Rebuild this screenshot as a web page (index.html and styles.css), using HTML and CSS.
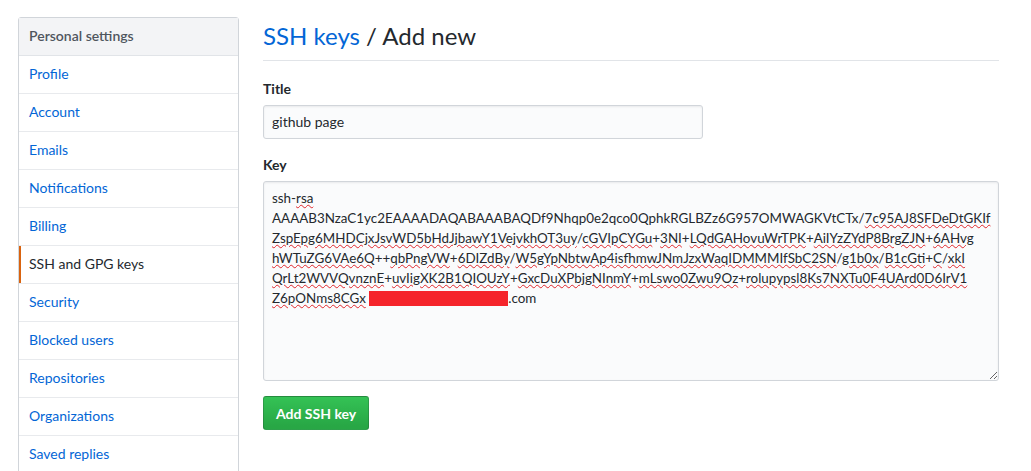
FILE: index.html
```html
<!DOCTYPE html>
<html lang="en">
<head>
<meta charset="utf-8">
<title>SSH keys / Add new</title>
<link rel="stylesheet" href="styles.css">
</head>
<body>
<div class="page">
  <nav class="menu">
    <div class="menu-heading">Personal settings</div>
    <a class="menu-item" href="#">Profile</a>
    <a class="menu-item" href="#">Account</a>
    <a class="menu-item" href="#">Emails</a>
    <a class="menu-item" href="#">Notifications</a>
    <a class="menu-item" href="#">Billing</a>
    <a class="menu-item selected" href="#">SSH and GPG keys</a>
    <a class="menu-item" href="#">Security</a>
    <a class="menu-item" href="#">Blocked users</a>
    <a class="menu-item" href="#">Repositories</a>
    <a class="menu-item" href="#">Organizations</a>
    <a class="menu-item" href="#">Saved replies</a>
  </nav>
  <main class="main">
    <h2 class="subhead"><a href="#" class="subhead-link">SSH keys</a> / Add new</h2>
    <form class="form">
      <label class="label">Title</label>
      <div class="input">github page</div>
      <label class="label">Key</label>
      <div class="textarea">
        <div class="line">ssh-<span class="sp">rsa</span></div>
        <div class="line">AAAAB3NzaC1yc2EAAAADAQABAAABAQDf9Nhqp0e2qco0QphkRGLBZz6G957OMWAGKVtCTx/<span class="sp">7c95AJ8SFDeDtGKIf</span></div>
        <div class="line"><span class="sp">ZspEpg6MHDCjxJsvWD5bHdJjbawY1VejvkhOT3uy</span>/<span class="sp">cGVIpCYGu</span>+<span class="sp">3NI</span>+<span class="sp">LQdGAHovuWrTPK</span>+<span class="sp">AiIYzZYdP8BrgZJN</span>+<span class="sp">6AHvg</span></div>
        <div class="line"><span class="sp">hWTuZG6VAe6Q</span>++<span class="sp">qbPngVW</span>+<span class="sp">6DIZdBy</span>/<span class="sp">W5gYpNbtwAp4isfhmwJNmJzxWaqIDMMMIfSbC2SN</span>/<span class="sp">g1b0x</span>/<span class="sp">B1cGti</span>+<span class="sp">C</span>/<span class="sp">xkI</span></div>
        <div class="line"><span class="sp">QrLt2WVVQvnznE</span>+<span class="sp">uvIigXK2B1QIOUzY</span>+<span class="sp">GxcDuXPbjgNInmY</span>+<span class="sp">mLswo0Zwu9Oz</span>+<span class="sp">rolupypsl8Ks7NXTu0F4UArd0D6IrV1</span></div>
        <div class="line"><span class="sp">Z6pONms8CGx</span> <span class="redact"></span>.com</div>
      </div>
      <button type="button" class="btn">Add SSH key</button>
    </form>
  </main>
</div>
</body>
</html>
```

FILE: styles.css
```css
* { box-sizing: border-box; }
html, body { margin: 0; padding: 0; background: #fff; }
body {
  font-family: "Lato", "Noto Sans", sans-serif;
  font-size: 14px;
  color: #24292e;
}
.page {
  display: flex;
  align-items: flex-start;
  gap: 24px;
  padding: 17px 0 0 18px;
}
.menu {
  width: 221px;
  flex: none;
  border: 1px solid #d1d5da;
  border-radius: 3px;
  background: #fff;
  display: flex;
  flex-direction: column;
}
.menu-heading {
  padding: 7px 10px 9px;
  line-height: 21px;
  font-weight: 600;
  color: #4f565e;
  background: #f3f4f6;
  border-bottom: 1px solid #e1e4e8;
}
.menu-item {
  display: block;
  padding: 7px 10px 9px;
  line-height: 21px;
  color: #0366d6;
  text-decoration: none;
  border-bottom: 1px solid #e8eaed;
}
.menu-item.selected {
  color: #24292e;
  box-shadow: inset 2px 0 0 #d9630f;
}
.main {
  width: 736px;
  flex: none;
}
.subhead {
  margin: 4px 0 0;
  padding-bottom: 9px;
  font-size: 24px;
  line-height: 30px;
  font-weight: 400;
  border-bottom: 1px solid #e1e4e8;
}
.subhead-link { color: #0366d6; text-decoration: none; }
.form {
  display: flex;
  flex-direction: column;
  align-items: flex-start;
  padding-top: 18px;
}
.label {
  display: block;
  font-weight: 700;
  line-height: 20px;
  margin-bottom: 6px;
}
.input {
  width: 440px;
  height: 34px;
  padding: 6px 8px;
  line-height: 20px;
  background: #fafbfc;
  border: 1px solid #d1d5da;
  border-radius: 3px;
  box-shadow: inset 0 1px 2px rgba(27,31,35,.075);
  margin-bottom: 16px;
}
.textarea {
  width: 736px;
  height: 200px;
  padding: 6px 8px;
  line-height: 20px;
  font-size: 13.4px;
  background: #fafbfc;
  border: 1px solid #d1d5da;
  border-radius: 3px;
  box-shadow: inset 0 1px 2px rgba(27,31,35,.075);
  overflow: hidden;
  resize: vertical;
  margin-bottom: 15px;
}
.line { white-space: nowrap; }
.sp {
  text-decoration: underline wavy #e0262b;
  text-decoration-thickness: 1px;
  text-underline-offset: 1px;
}
.redact {
  display: inline-block;
  width: 139px;
  height: 15px;
  background: #f5242b;
  vertical-align: -3px;
}
.btn {
  height: 34px;
  padding: 0 12px;
  font-family: inherit;
  font-size: 14px;
  font-weight: 700;
  color: #fff;
  background: linear-gradient(#34c255, #28a745 90%);
  border: 1px solid rgba(27,31,35,.2);
  border-radius: 3px;
  cursor: pointer;
}
```
